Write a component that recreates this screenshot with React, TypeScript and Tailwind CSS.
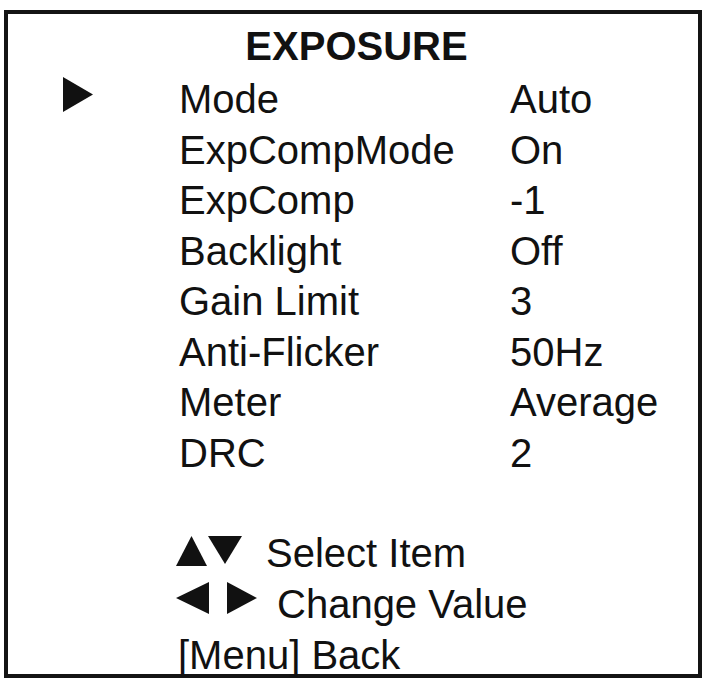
import type { ReactNode } from 'react';

const rows: [string, string][] = [
  ['Mode', 'Auto'],
  ['ExpCompMode', 'On'],
  ['ExpComp', '-1'],
  ['Backlight', 'Off'],
  ['Gain Limit', '3'],
  ['Anti-Flicker', '50Hz'],
  ['Meter', 'Average'],
  ['DRC', '2'],
];

function Tri({ dir, className }: { dir: 'up' | 'down' | 'left' | 'right'; className: string }) {
  const points = {
    up: '50,0 100,100 0,100',
    down: '0,0 100,0 50,100',
    left: '100,0 100,100 0,50',
    right: '0,0 100,50 0,100',
  }[dir];
  return (
    <svg viewBox="0 0 100 100" preserveAspectRatio="none" className={className}>
      <polygon points={points} fill="#111" />
    </svg>
  );
}

function HelpLine({ children }: { children: ReactNode }) {
  return <div className="flex h-[51px] items-start">{children}</div>;
}

export default function App() {
  return (
    <div className="min-h-[686px] w-[709px] overflow-hidden bg-white">
      <div
        className="ml-[4px] mt-[10px] h-[668px] w-[698px] border-4 border-[#141414] pt-[7px] text-[40px] leading-[50.5px] text-[#111]"
        style={{ fontFamily: '"Liberation Sans", Arial, sans-serif' }}
      >
        <h1 className="pl-[7px] text-center font-bold">EXPOSURE</h1>

        <div className="mt-[2.5px] grid grid-cols-[171px_331px_1fr]">
          {rows.map(([label, value], i) => (
            <div key={label} className="contents">
              <div className="flex h-[50.5px] items-start pl-[55px] pt-[3px]">
                {i === 0 ? <Tri dir="right" className="h-[35px] w-[30px]" /> : null}
              </div>
              <div className="whitespace-nowrap">{label}</div>
              <div className="whitespace-nowrap">{value}</div>
            </div>
          ))}
        </div>

        <div className="mt-[49.5px] pl-[168px]">
          <HelpLine>
            <Tri dir="up" className="mt-[8px] h-[30px] w-[31px]" />
            <Tri dir="down" className="mt-[8px] ml-[1px] h-[28px] w-[34px]" />
            <span className="ml-[24px] whitespace-nowrap">Select Item</span>
          </HelpLine>
          <HelpLine>
            <Tri dir="left" className="mt-[3px] h-[32px] w-[33px]" />
            <Tri dir="right" className="mt-[3px] ml-[18px] h-[32px] w-[30px]" />
            <span className="ml-[20px] whitespace-nowrap">Change Value</span>
          </HelpLine>
          <HelpLine>
            <span className="ml-[2px] whitespace-nowrap">[Menu] Back</span>
          </HelpLine>
        </div>
      </div>
    </div>
  );
}
